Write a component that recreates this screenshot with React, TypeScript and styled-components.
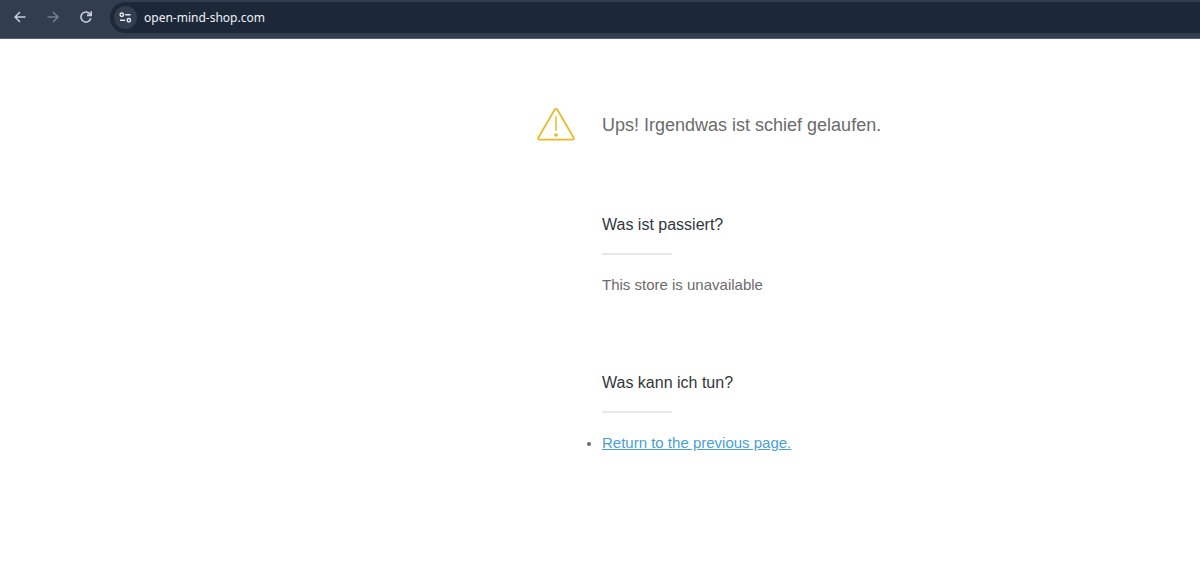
import React from "react";
import styled, { createGlobalStyle } from "styled-components";

const GlobalStyle = createGlobalStyle`
  * { box-sizing: border-box; }
  body {
    margin: 0;
    background: #fff;
    font-family: "Liberation Sans", Arial, sans-serif;
    color: #6b6b6b;
  }
`;

const Toolbar = styled.header`
  display: flex;
  align-items: center;
  height: 39px;
  padding: 1px 0 5px 3px;
  border-bottom: 1px solid #5a5f6e;
  background: #323d4e;
`;

const NavButton = styled.button`
  display: flex;
  align-items: center;
  justify-content: center;
  width: 33px;
  height: 31px;
  padding: 0;
  border: 0;
  background: none;
  color: #c6cedb;
  &:disabled { color: #76808f; }
`;

const AddressBar = styled.div`
  display: flex;
  flex: 1;
  align-items: center;
  height: 31px;
  margin-left: 8px;
  padding-left: 4px;
  gap: 7px;
  border-radius: 16px 0 0 16px;
  background: #1c2838;
`;

const SiteButton = styled.button`
  display: flex;
  align-items: center;
  justify-content: center;
  width: 23px;
  height: 23px;
  padding: 0;
  border: 0;
  border-radius: 50%;
  background: #323d4e;
  color: #e3e6eb;
`;

const AddressInput = styled.input`
  flex: 1;
  min-width: 0;
  padding: 0;
  border: 0;
  outline: 0;
  background: none;
  color: #f0f2f5;
  font: 12px "Noto Sans", sans-serif;
`;

const Page = styled.main`
  display: grid;
  grid-template-columns: 38px 1fr;
  column-gap: 27px;
  margin-left: 537px;
  padding: 68px 24px 40px 0;
`;

const Title = styled.h1`
  margin: 0;
  font-size: 18px;
  font-weight: 400;
  line-height: 36px;
`;

const Section = styled.section`
  grid-column: 2;
  padding: 70px 0 5px;
  font-size: 15px;
  line-height: 22px;
`;

const Heading = styled.h2`
  margin: 0;
  color: #32373c;
  font-size: 16px;
  font-weight: 400;
  line-height: 24px;
  &::after {
    content: "";
    display: block;
    width: 70px;
    height: 2px;
    margin: 16px 0 19px;
    background: #e8e8e8;
  }
`;

const Text = styled.p`
  margin: 0;
`;

const List = styled.ul`
  margin: 0;
  padding: 0;
  li::marker { font-size: 14px; }
`;

const Link = styled.a`
  color: #4a9fd4;
`;

export default function App() {
  return (
    <>
      <GlobalStyle />
      <Toolbar>
        <NavButton aria-label="Back">
          <svg width="12" height="12" viewBox="0 0 12 12" fill="none" stroke="currentColor" strokeWidth="1.5">
            <path d="M11.5 6H1M6 1L1 6l5 5" />
          </svg>
        </NavButton>
        <NavButton aria-label="Forward" disabled>
          <svg width="12" height="12" viewBox="0 0 12 12" fill="none" stroke="currentColor" strokeWidth="1.5">
            <path d="M.5 6H11M6 1l5 5-5 5" />
          </svg>
        </NavButton>
        <NavButton aria-label="Reload">
          <svg width="12" height="12" viewBox="0 0 12 12" fill="none" stroke="currentColor" strokeWidth="1.6">
            <path d="M10.4 3.8A5 5 0 1 0 10.8 7.2M11.2 .3V4.4H7" />
          </svg>
        </NavButton>
        <AddressBar>
          <SiteButton aria-label="Site information">
            <svg width="13" height="11" viewBox="0 0 13 11" fill="none" stroke="currentColor" strokeWidth="1.5">
              <circle cx="2.8" cy="2.7" r="1.7" />
              <path d="M6.2 2.7h5.3M1 8.3h5" />
              <circle cx="9.8" cy="8.3" r="1.7" />
            </svg>
          </SiteButton>
          <AddressInput aria-label="Address" defaultValue="open-mind-shop.com" />
        </AddressBar>
      </Toolbar>
      <Page>
        <svg width="38" height="36" viewBox="0 0 38 36" fill="none" stroke="#e8b923" strokeWidth="1.8" strokeLinejoin="round" aria-hidden="true">
          <path d="M17.6 2.8 1.4 30.6Q.6 32.6 2.8 32.6H35.2Q37.4 32.6 36.6 30.6L20.4 2.8Q19 .8 17.6 2.8Z" />
          <path d="M19 9.2v14.6" strokeWidth="1.5" />
          <circle cx="19" cy="28" r="1.8" fill="#e8b923" stroke="none" />
        </svg>
        <Title>Ups! Irgendwas ist schief gelaufen.</Title>
        <Section>
          <Heading>Was ist passiert?</Heading>
          <Text>This store is unavailable</Text>
        </Section>
        <Section>
          <Heading>Was kann ich tun?</Heading>
          <List>
            <li><Link href="#previous">Return to the previous page.</Link></li>
          </List>
        </Section>
      </Page>
    </>
  );
}
